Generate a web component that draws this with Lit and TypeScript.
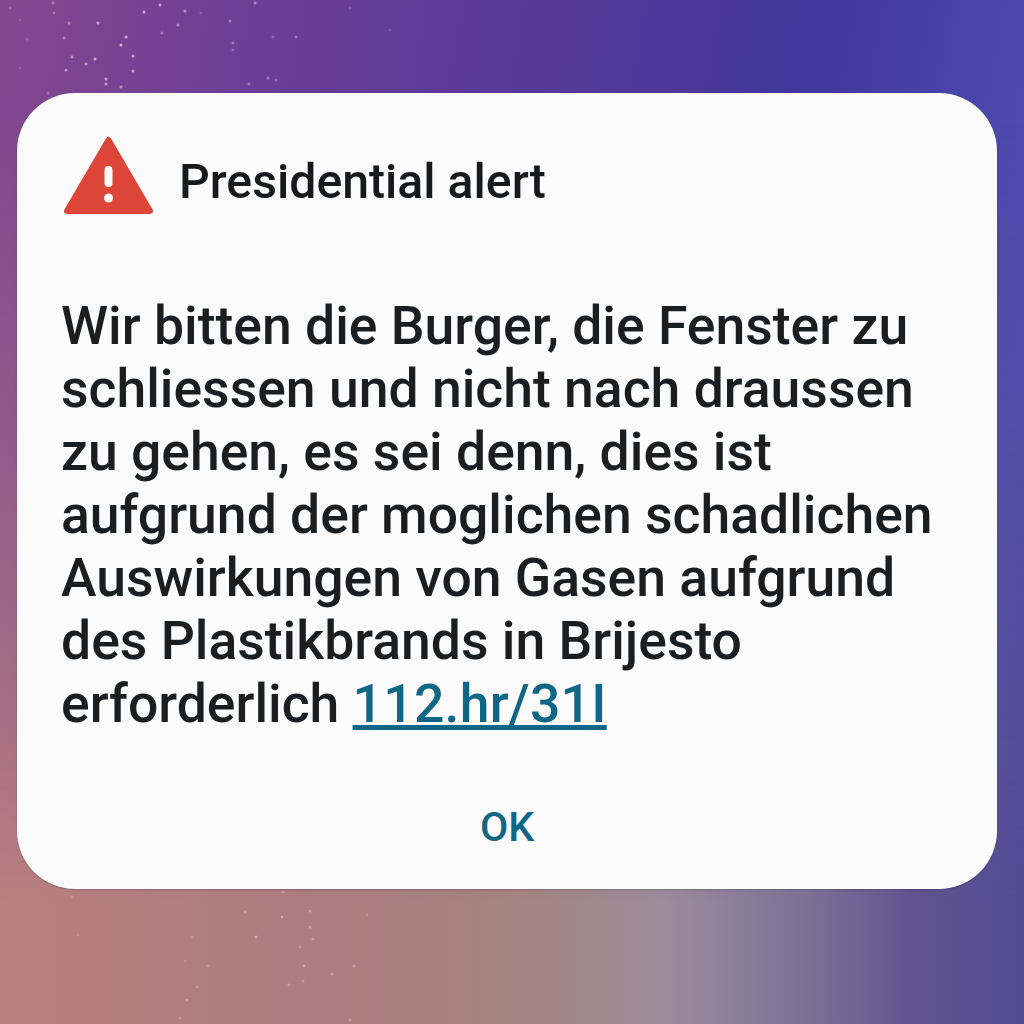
import { LitElement, html, css, svg } from "lit";
import { customElement } from "lit/decorators.js";

const STARS: [number, number, number][] = [
  [160,5,.65],[144,12,.7],[185,11,.55],[98,23,.65],[126,37,.75],[121,45,.75],[133,56,.7],[95,59,.7],[86,64,.6],[72,57,.6],
  [66,70,.6],[133,71,.65],[106,79,.65],[106,84,.6],[121,87,.55],[64,38,.45],[69,23,.45],[53,3,.4],[54,13,.35],[178,25,.5],
  [162,33,.4],[230,21,.45],[255,3,.5],[233,43,.4],[233,50,.3],[296,37,.45],[273,37,.3],[268,78,.4],[276,80,.3],[249,84,.4],
  [10,8,.25],[20,20,.2],[27,39,.25],[20,68,.2],[48,93,.3],[201,13,.25],[350,8,.2],[390,30,.2],
  [283,892,.4],[245,912,.3],[282,917,.5],[310,911,.4],[310,927,.45],[313,939,.45],[256,937,.5],[300,947,.35],[304,966,.4],
  [354,966,.35],[332,974,.45],[289,985,.4],[303,981,.3],[187,1000,.4],[350,1020,.4],[197,987,.25],[185,961,.25],[208,966,.25],
  [192,937,.25],[72,897,.2],[78,935,.2],[367,915,.2],[180,1018,.25]
];

@customElement("app-root")
export class AppRoot extends LitElement {
  static styles = css`
    :host { display: block; }
    .screen {
      position: relative;
      width: 1024px; height: 1024px; box-sizing: border-box;
      overflow: hidden;
      padding: 93px 27px 135px 17px;
      background: linear-gradient(100deg, #84488f 0%, #6a3d96 24%, #41369a 68%, #4f4fb2 90%, #5252b6 100%);
    }
    .warm {
      position: absolute; inset: 0;
      background: linear-gradient(90deg, #b8807f 0%, #ad7c7e 30%, #a5847f 50%, #9b8c9a 65%, #7c7096 79%, #60558f 89%, #544b92 100%);
      -webkit-mask-image: linear-gradient(180deg, transparent 12%, rgba(0,0,0,.45) 50%, #000 88%);
      mask-image: linear-gradient(180deg, transparent 12%, rgba(0,0,0,.45) 50%, #000 88%);
    }
    .stars { position: absolute; inset: 0; width: 100%; height: 100%; }
    .card {
      position: relative;
      height: 796px; box-sizing: border-box;
      background: #fbfbfb;
      border-radius: 58px;
      box-shadow: 0 1px 2px rgba(0,0,0,.2);
      padding: 40px 44px 0 44px;
      display: flex; flex-direction: column;
      font-family: Roboto, sans-serif;
    }
    .head { display: flex; align-items: center; gap: 25px; height: 84px; }
    .icon { width: 93px; height: 84px; flex: none; display: block; }
    .title { font-size: 48.2px; font-weight: 500; color: #17191c; margin-top: 12px; white-space: nowrap; }
    .body {
      margin: 77px 0 0 0;
      font-size: 53.5px; line-height: 63px; font-weight: 500; color: #1b1e21;
      white-space: nowrap;
    }
    .link { color: #0f6685; text-decoration: underline; letter-spacing: .25px; }
    .actions { flex: 1; display: flex; justify-content: center; align-items: flex-start; padding-top: 68px; }
    .ok { font-size: 41px; font-weight: 500; color: #0f6685; }
  `;

  render() {
    return html`<div class="screen">
      <div class="warm"></div>
      <svg class="stars" viewBox="0 0 1024 1024">
        ${STARS.map(([x, y, o]) => svg`<circle cx=${x} cy=${y} r="1.5" fill="#f2d6ee" opacity=${o}></circle>`)}
      </svg>
      <div class="card">
        <div class="head">
          <svg class="icon" viewBox="0 0 93 84">
            <path d="M47.5 7 L89 78 H6 Z" fill="#dd4539" stroke="#dd4539" stroke-width="6" stroke-linejoin="round"></path>
            <rect x="43.5" y="33" width="8" height="21" rx="4" fill="#fbfbfb"></rect>
            <circle cx="47.5" cy="65" r="4.5" fill="#fbfbfb"></circle>
          </svg>
          <div class="title">Presidential alert</div>
        </div>
        <p class="body">Wir bitten die Burger, die Fenster zu<br>schliessen und nicht nach draussen<br>zu gehen, es sei denn, dies ist<br>aufgrund der moglichen schadlichen<br>Auswirkungen von Gasen aufgrund<br>des Plastikbrands in Brijesto<br>erforderlich <span class="link">112.hr/31I</span></p>
        <div class="actions"><span class="ok">OK</span></div>
      </div>
    </div>`;
  }
}
